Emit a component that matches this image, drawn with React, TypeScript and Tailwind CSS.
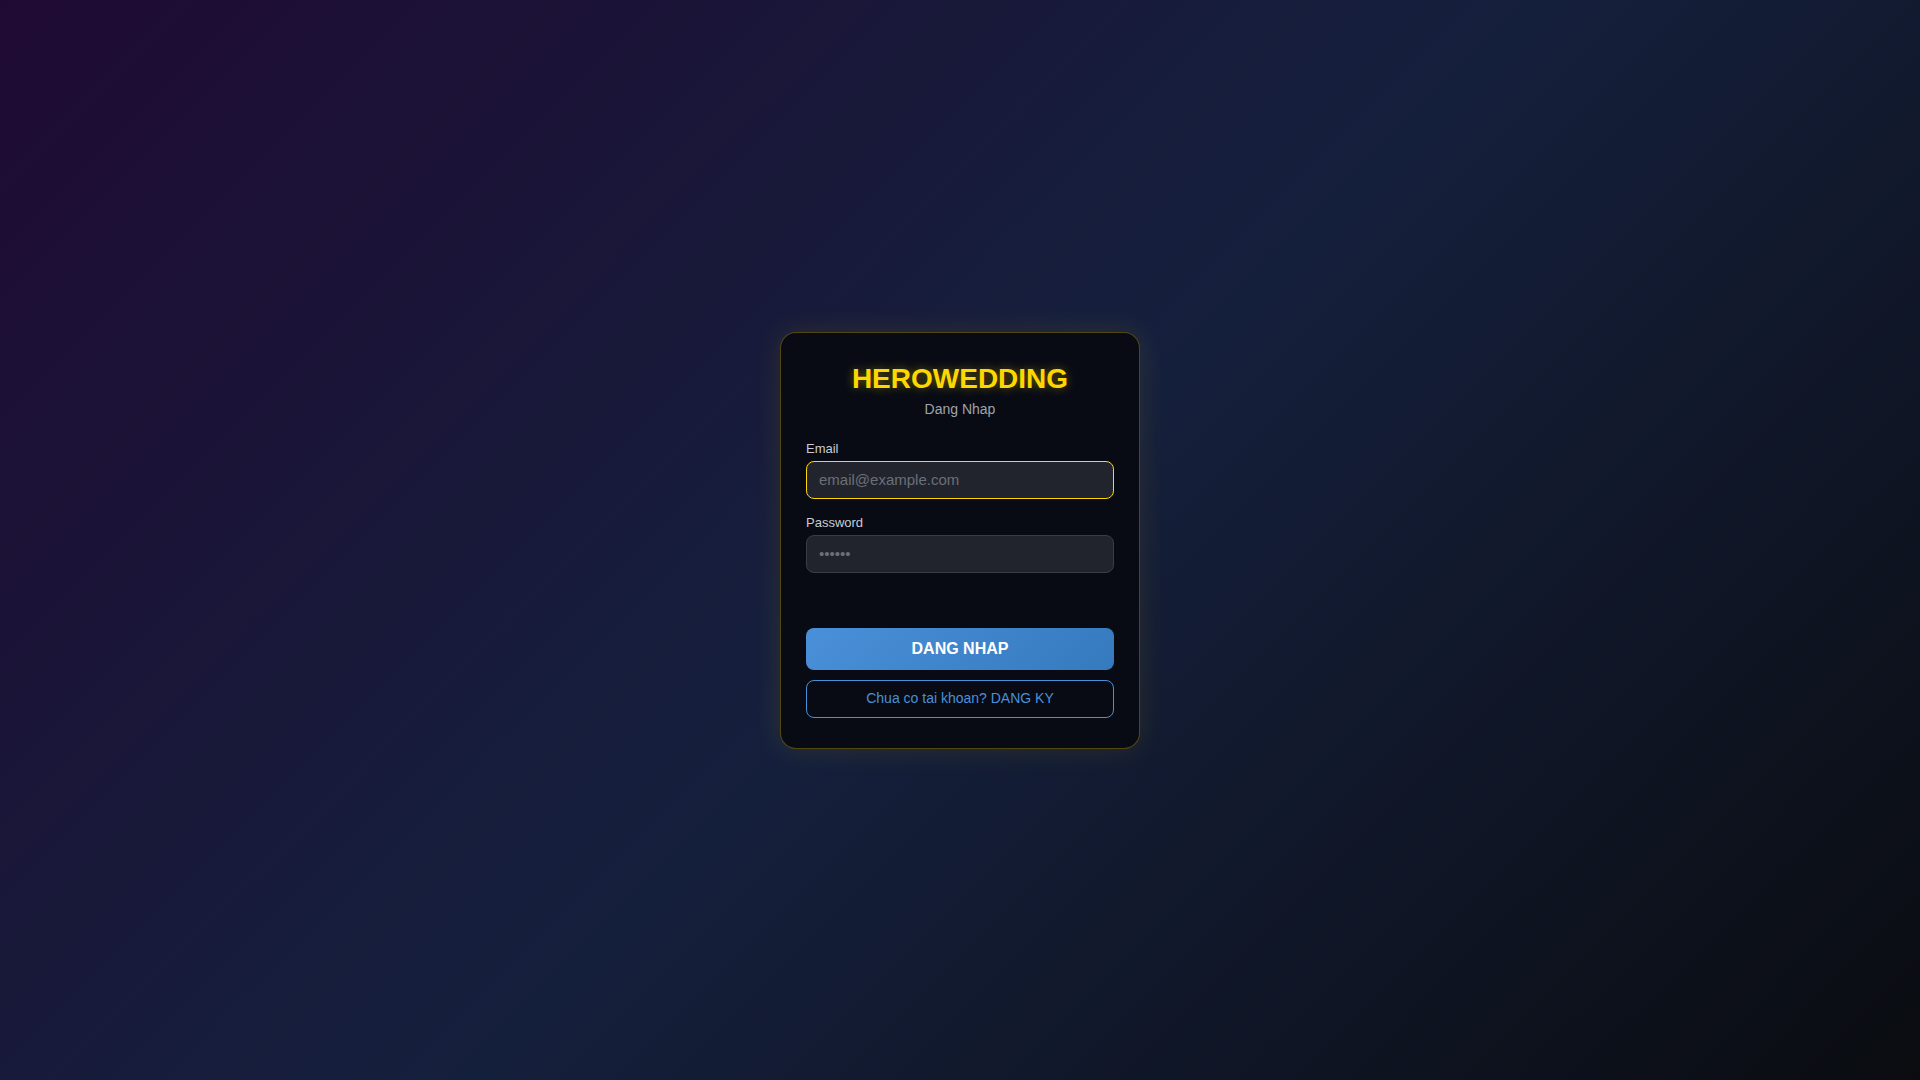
import { useState } from 'react';

const App = () => {
  const [email, setEmail] = useState('');
  const [password, setPassword] = useState('');

  const handleLogin = (e: React.FormEvent) => {
    e.preventDefault();
  };

  return (
    <div className="min-h-screen w-full flex items-center justify-center bg-[linear-gradient(135deg,#1f0a33_0%,#15203d_50%,#0a0c10_100%)] font-['Liberation_Sans',Arial,sans-serif]">
      <form
        onSubmit={handleLogin}
        className="w-[360px] rounded-2xl border border-[rgba(255,215,0,0.3)] bg-[#080b14] px-[25px] pt-[30px] pb-[30px] shadow-[0_0_30px_rgba(255,215,0,0.1)]"
      >
        <div className="text-center mb-6">
          <h1 className="text-[28px] leading-[32px] font-bold text-[#ffd700] [text-shadow:0_0_10px_rgba(255,215,0,0.4)] mb-1.5">
            HEROWEDDING
          </h1>
          <p className="text-[14px] leading-[16px] text-[#a0a3aa]">Dang Nhap</p>
        </div>

        <div className="mb-4">
          <label className="block text-[13px] leading-[15px] text-[#c9ccd2] mb-[5px]">Email</label>
          <input
            type="email"
            value={email}
            onChange={(e) => setEmail(e.target.value)}
            placeholder="email@example.com"
            className="w-full h-[38px] px-3 rounded-lg bg-[#21242d] border border-[#ffd700] text-[15px] text-white placeholder:text-[#6b6f78] outline-none"
          />
        </div>

        <div className="mb-4">
          <label className="block text-[13px] leading-[15px] text-[#c9ccd2] mb-[5px]">Password</label>
          <input
            type="password"
            value={password}
            onChange={(e) => setPassword(e.target.value)}
            placeholder="••••••"
            className="w-full h-[38px] px-3 rounded-lg bg-[#21242d] border border-[#3a3d45] text-[15px] text-white placeholder:text-[#6b6f78] outline-none"
          />
        </div>

        <button
          type="submit"
          className="mt-[39px] w-full h-[42px] rounded-lg bg-[linear-gradient(135deg,#4a90d9,#357abd)] text-white text-[16px] font-bold"
        >
          DANG NHAP
        </button>

        <button
          type="button"
          className="mt-[10px] w-full h-[38px] rounded-lg border border-[#4a90d9] bg-transparent text-[#4a90d9] text-[14px]"
        >
          Chua co tai khoan? DANG KY
        </button>
      </form>
    </div>
  );
};

export default App;
